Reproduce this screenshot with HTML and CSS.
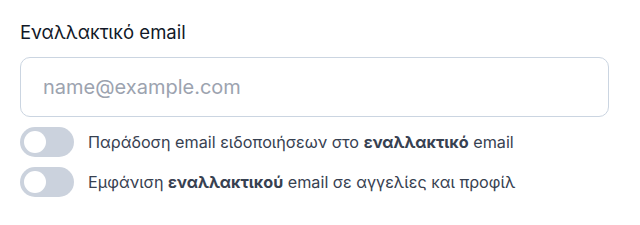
FILE: index.html
```html
<!DOCTYPE html>
<html lang="el">
<head>
    <meta charset="UTF-8">
    <meta name="viewport" content="width=device-width, initial-scale=1.0">
    <title>Εναλλακτικό email</title>
    <link rel="stylesheet" href="styles.css">
</head>
<body>
    <div class="field">
        <label class="field-label" for="alt-email">Εναλλακτικό email</label>
        <input class="field-input" id="alt-email" type="email" placeholder="name@example.com">

        <div class="options">
            <label class="option">
                <span class="switch"><span class="knob"></span></span>
                <span class="option-text">Παράδοση email ειδοποιήσεων στο <b>εναλλακτικό</b> email</span>
            </label>
            <label class="option">
                <span class="switch"><span class="knob"></span></span>
                <span class="option-text">Εμφάνιση <b>εναλλακτικού</b> email σε αγγελίες και προφίλ</span>
            </label>
        </div>
    </div>
</body>
</html>
```

FILE: styles.css
```css
* {
    margin: 0;
    padding: 0;
    box-sizing: border-box;
}

body {
    font-family: Inter, 'Noto Sans', sans-serif;
    background: #fff;
    color: #111827;
}

.field {
    display: flex;
    flex-direction: column;
    padding: 20px 31px 0 20px;
}

.field-label {
    font-size: 18.5px;
    line-height: 24px;
    color: #111827;
    margin-bottom: 13px;
}

.field-input {
    height: 60px;
    width: 100%;
    padding: 0 22px;
    border: 1px solid #cbd5e1;
    border-radius: 10px;
    font-family: inherit;
    font-size: 20px;
    color: #111827;
    outline: none;
}

.field-input::placeholder {
    color: #9ca3af;
}

.options {
    display: flex;
    flex-direction: column;
    gap: 10px;
    margin-top: 10px;
}

.option {
    display: flex;
    align-items: center;
    gap: 14px;
}

.switch {
    display: flex;
    align-items: center;
    width: 54px;
    height: 30px;
    padding: 0 4px;
    border-radius: 15px;
    background: #cbd2dd;
    flex-shrink: 0;
}

.knob {
    width: 22px;
    height: 22px;
    border-radius: 50%;
    background: #fff;
}

.option-text {
    font-size: 16.2px;
    color: #374151;
}

.option-text b {
    font-weight: 700;
    color: #374151;
}
```
